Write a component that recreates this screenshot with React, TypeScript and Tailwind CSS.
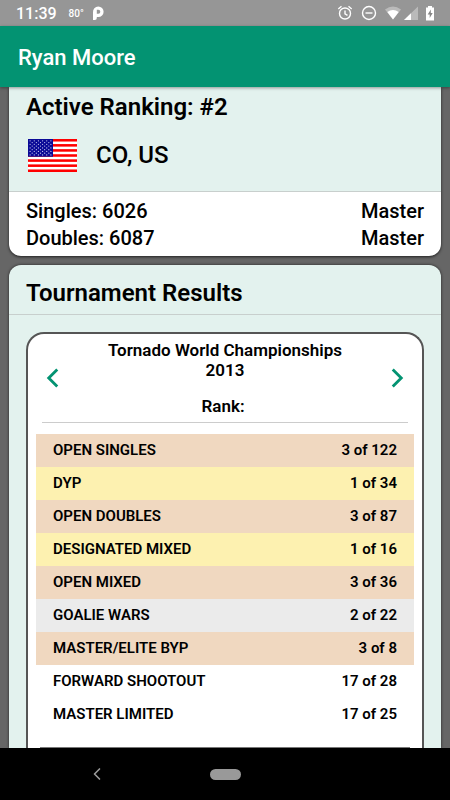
import { ChevronLeft, ChevronRight } from "lucide-react";

type Result = { event: string; rank: string; color: string };

const BRONZE = "bg-[#f0d8c0]";
const GOLD = "bg-[#fdf1b0]";
const SILVER = "bg-[#ebebeb]";

const results: Result[] = [
  { event: "OPEN SINGLES", rank: "3 of 122", color: BRONZE },
  { event: "DYP", rank: "1 of 34", color: GOLD },
  { event: "OPEN DOUBLES", rank: "3 of 87", color: BRONZE },
  { event: "DESIGNATED MIXED", rank: "1 of 16", color: GOLD },
  { event: "OPEN MIXED", rank: "3 of 36", color: BRONZE },
  { event: "GOALIE WARS", rank: "2 of 22", color: SILVER },
  { event: "MASTER/ELITE BYP", rank: "3 of 8", color: BRONZE },
  { event: "FORWARD SHOOTOUT", rank: "17 of 28", color: "bg-white" },
  { event: "MASTER LIMITED", rank: "17 of 25", color: "bg-white" },
];

function StatusBar() {
  return (
    <div className="flex h-[26px] shrink-0 items-center bg-[#969696] pr-4 pl-4 text-white">
      <span className="pt-[2px] text-base leading-6">11:39</span>
      <span className="ml-3 pt-[2px] text-[10px] leading-6">80°</span>
      <svg className="ml-2 h-4 w-3" viewBox="0 0 12 16" aria-hidden="true">
        <path
          fillRule="evenodd"
          fill="currentColor"
          d="M1 7.500A5.500 5.500 0 0 1 6.300 1.500 5.300 5.300 0 0 1 6.300 12.100H4.800V13q0 2-1.900 2H1zM4.800 4.800v4h1.500a2 2 0 0 0 0-4z"
        />
      </svg>
      <svg className="ml-auto h-4 w-4" viewBox="0 0 16 16" fill="none" stroke="currentColor" strokeWidth="1.400" aria-hidden="true">
        <circle cx="8" cy="8.500" r="5.500" />
        <path d="M1.300 4 4.500 1.300M14.700 4l-3.200-2.700M8 5.500v3.300l2.500 1.500" />
      </svg>
      <svg className="ml-2 h-4 w-4" viewBox="0 0 16 16" fill="none" stroke="currentColor" strokeWidth="1.400" aria-hidden="true">
        <circle cx="8" cy="8" r="6.500" />
        <path d="M4.500 8h7" />
      </svg>
      <svg className="ml-2 h-4 w-4" viewBox="0 0 16 16" fill="currentColor" aria-hidden="true">
        <path opacity="0.35" d="M0 4.500q8-6 16 0L8 14.500z" />
        <path d="M2.300 7q5.700-4 11.400 0L8 14.500z" />
      </svg>
      <svg className="ml-[3px] h-4 w-[14px]" viewBox="0 0 14 16" fill="currentColor" aria-hidden="true">
        <path opacity="0.35" d="M0 15 14 1.500V15z" />
        <path d="M0 15 7 8.200V15z" />
      </svg>
      <svg className="ml-2 h-4 w-2" viewBox="0 0 8 16" aria-hidden="true">
        <path fill="currentColor" d="M0 2.500h2V1h4v1.500h2V15.500H0z" />
        <path fill="#858585" d="M4.800 4.500 1.700 9.500h2v3.500l3-5H4.800z" />
      </svg>
    </div>
  );
}

function Flag() {
  const rows = [0, 1, 2, 3, 4, 5, 6, 7, 8];
  return (
    <svg className="h-[33px] w-[49px]" viewBox="0 0 49 33" role="img" aria-label="United States">
      <rect width="49" height="33" fill="#fff" />
      {[0, 1, 2, 3, 4, 5, 6].map((i) => (
        <rect key={i} y={i * 5.08} width="49" height="2.540" fill="#f00" />
      ))}
      <rect width="25" height="17.700" fill="#0a0a96" />
      {rows.map((row) =>
        (row % 2 ? [0, 1, 2, 3, 4] : [0, 1, 2, 3, 4, 5]).map((col) => (
          <circle
            key={`${row}-${col}`}
            cx={2.1 + col * 4.16 + (row % 2 ? 2.08 : 0)}
            cy={1.8 + row * 1.77}
            r="0.600"
            fill="#c9c9ee"
          />
        )),
      )}
    </svg>
  );
}

function RankingCard() {
  return (
    <section className="overflow-hidden rounded-b-xl bg-white shadow-[0_1px_3px_#000000b0]">
      <div className="border-b border-[#c8cfcd] bg-[#e3f2ee] px-[17px] pt-1 pb-[19px]">
        <h2 className="text-2xl leading-8 font-semibold">Active Ranking: #2</h2>
        <div className="mt-4 flex items-center gap-[19px] pl-[2px] text-2xl leading-[33px]">
          <Flag />
          <span>CO, US</span>
        </div>
      </div>
      <dl className="px-[17px] pt-[6px] pb-1 text-xl leading-[27px]">
        <div className="flex justify-between">
          <dt>Singles: 6026</dt>
          <dd>Master</dd>
        </div>
        <div className="flex justify-between">
          <dt>Doubles: 6087</dt>
          <dd>Master</dd>
        </div>
      </dl>
    </section>
  );
}

function TournamentCard() {
  return (
    <section className="mt-[9px] flex flex-1 flex-col rounded-t-xl bg-[#e3f2ee] shadow-[0_0_3px_#000000b0]">
      <h2 className="border-b border-[#c8cfcd] px-[17px] pt-3 pb-[5px] text-2xl leading-8 font-semibold">
        Tournament Results
      </h2>
      <div className="mx-[17px] mt-[17px] flex flex-1 flex-col rounded-t-[18px] border-2 border-b-0 border-[#555] bg-white px-2">
        <div className="flex items-center pt-[6px]">
          <button type="button" aria-label="Previous tournament" className="text-[#039372]">
            <ChevronLeft size={34} strokeWidth={2} strokeLinecap="butt" strokeLinejoin="miter" />
          </button>
          <div className="flex-1 text-center text-[17px] leading-5 font-semibold">
            <h3>Tornado World Championships</h3>
            <p>2013</p>
            <p className="mt-4 pr-1">Rank:</p>
          </div>
          <button type="button" aria-label="Next tournament" className="text-[#039372]">
            <ChevronRight size={34} strokeWidth={2} strokeLinecap="butt" strokeLinejoin="miter" />
          </button>
        </div>
        <hr className="mx-[6px] mt-[6px] border-[#ccc]" />
        <table className="mt-[11px] w-full text-[15px] font-semibold">
          <tbody>
            {results.map((result) => (
              <tr key={result.event} className={result.color}>
                <th scope="row" className="h-[33px] p-0 pl-[17px] text-left font-semibold">
                  {result.event}
                </th>
                <td className="p-0 pr-[17px] text-right">{result.rank}</td>
              </tr>
            ))}
          </tbody>
        </table>
        <hr className="mx-1 mt-auto border-[#777]" />
      </div>
    </section>
  );
}

export default function App() {
  return (
    <div className="flex min-h-screen flex-col bg-[#666] font-['Roboto',sans-serif] font-medium text-black">
      <StatusBar />
      <header className="z-10 flex h-[61px] shrink-0 items-center bg-[#039372] px-[18px] pt-[2px] shadow-[0_1px_3px_#00000060]">
        <h1 className="text-[22px] leading-8 text-white">Ryan Moore</h1>
      </header>
      <main className="flex flex-1 flex-col px-[9px]">
        <RankingCard />
        <TournamentCard />
      </main>
      <nav className="z-10 grid h-[52px] shrink-0 grid-cols-[1fr_auto_1fr] items-center bg-black">
        <button type="button" aria-label="Back" className="mr-4 justify-self-center text-[#999]">
          <ChevronLeft size={20} strokeWidth={2} />
        </button>
        <button type="button" aria-label="Home" className="h-[11px] w-[31px] rounded-full bg-[#999]" />
      </nav>
    </div>
  );
}
